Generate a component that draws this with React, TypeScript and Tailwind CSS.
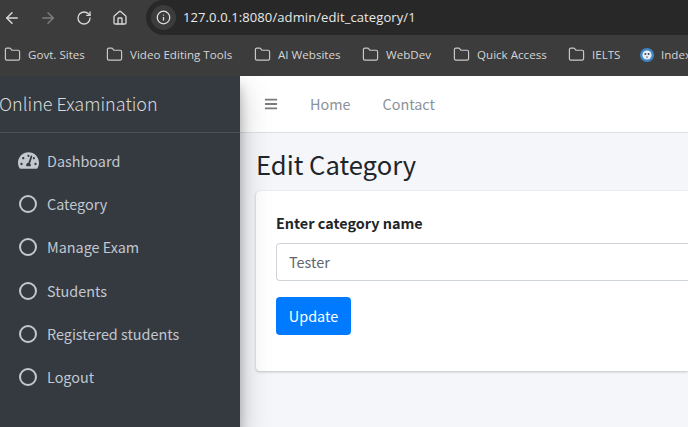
import { ArrowLeft, ArrowRight, RotateCw, Home, Info, Folder } from 'lucide-react';
import { FaBars, FaTachometerAlt } from 'react-icons/fa';

const bookmarks = [
  { label: 'Govt. Sites', width: 'w-[102px]' },
  { label: 'Video Editing Tools', width: 'w-[148px]' },
  { label: 'AI Websites', width: 'w-[108px]' },
  { label: 'WebDev', width: 'w-[91px]' },
  { label: 'Quick Access', width: 'w-[115px]' },
  { label: 'IELTS', width: 'w-[72px]' },
];

const navItems = ['Category', 'Manage Exam', 'Students', 'Registered students', 'Logout'];

function IndexFavicon() {
  return (
    <svg width="14" height="14" viewBox="0 0 14 14" className="shrink-0">
      <circle cx="7" cy="7" r="7" fill="#3f86c6" />
      <circle cx="7" cy="7" r="4.6" fill="#e8eef4" />
      <circle cx="5.4" cy="6" r="1" fill="#33475b" />
      <circle cx="8.6" cy="6" r="1" fill="#33475b" />
      <path d="M6.2 8.4h1.6L7 10.4z" fill="#33475b" />
    </svg>
  );
}

function BrowserChrome() {
  return (
    <div className="h-[76px] shrink-0 bg-[#3c3c3c] text-[#e3e3e3] font-['Open_Sans',sans-serif]">
      <div className="flex h-[35px] items-center">
        <ArrowLeft size={18} className="ml-[3px] text-[#d8d8d8]" />
        <ArrowRight size={18} className="ml-[18px] text-[#7d7d7d]" />
        <RotateCw size={16} className="ml-[19px] text-[#d8d8d8]" />
        <Home size={16} className="ml-[20px] text-[#d8d8d8]" />
        <div className="ml-[18px] flex h-[35px] flex-1 items-center rounded-l-full bg-[#282828] pl-[5px]">
          <div className="flex h-[25px] w-[25px] items-center justify-center rounded-full bg-[#3c3c3c]">
            <Info size={15} className="text-[#e3e3e3]" />
          </div>
          <span className="ml-[7px] text-[13px] tracking-[0.1px] text-[#e8e8e8]">127.0.0.1:8080/admin/edit_category/1</span>
        </div>
      </div>
      <div className="flex h-[40px] items-center overflow-hidden whitespace-nowrap pl-[4px] text-[11.6px] text-[#d5d5d5]">
        {bookmarks.map((b) => (
          <div key={b.label} className={`flex shrink-0 items-center gap-[7px] ${b.width}`}>
            <Folder size={17} strokeWidth={1.7} className="text-[#c8c8c8]" />
            <span>{b.label}</span>
          </div>
        ))}
        <div className="flex shrink-0 items-center gap-[7px]">
          <IndexFavicon />
          <span>Index</span>
        </div>
      </div>
    </div>
  );
}

function Sidebar() {
  return (
    <aside className="relative z-10 w-[240px] shrink-0 bg-[#343a40] shadow-[0_14px_28px_rgba(0,0,0,0.25),0_10px_10px_rgba(0,0,0,0.22)]">
      <div className="flex h-[57px] items-center border-b border-[#4b545c] pb-[2px]">
        <span className="-ml-[1px] text-[18px] font-light text-[#d6d8da]">Online Examination</span>
      </div>
      <nav className="pt-[6px] text-[14.4px] text-[#c2c7d0]">
        <div className="flex h-[43.3px] items-center pl-[18px]">
          <FaTachometerAlt size={21} className="text-[#c2c7d0]" />
          <span className="ml-[8px]">Dashboard</span>
        </div>
        {navItems.map((item) => (
          <div key={item} className="flex h-[43.3px] items-center pl-[19px]">
            <span className="h-[18px] w-[18px] rounded-full border-[2px] border-[#c2c7d0]" />
            <span className="ml-[10px]">{item}</span>
          </div>
        ))}
      </nav>
    </aside>
  );
}

export default function App() {
  return (
    <div className="flex h-[427px] w-[688px] flex-col overflow-hidden font-['Noto_Sans_CJK_SC','Noto_Sans',sans-serif]">
      <BrowserChrome />
      <div className="flex flex-1 overflow-hidden">
        <Sidebar />
        <main className="flex-1 bg-[#f4f6f9]">
          <div className="flex h-[57px] items-center border-b border-[#dee2e6] bg-white pl-[24px] text-[14.4px] text-[#8b9299]">
            <FaBars size={14} className="text-[#7b7b7b]" />
            <span className="ml-[32px]">Home</span>
            <span className="ml-[32px]">Contact</span>
          </div>
          <h1 className="ml-[16px] mt-[14px] text-[25.6px] leading-[34px] text-[#212529]">Edit Category</h1>
          <section className="ml-[16px] mt-[10px] h-[180px] rounded-l-[4px] bg-white pl-[20px] pt-[20px] shadow-[0_0_1px_rgba(0,0,0,0.13),0_1px_3px_rgba(0,0,0,0.2)]">
            <label className="block text-[14.4px] font-bold leading-[24px] text-[#212529]">Enter category name</label>
            <div className="mt-[8px] flex h-[38px] items-center rounded-l-[4px] border border-r-0 border-[#ced4da] pl-[12px] text-[14.4px] text-[#5f666d]">
              Tester
            </div>
            <button className="mt-[16px] h-[38px] w-[75px] rounded-[4px] bg-[#007bff] text-[14.4px] text-white">Update</button>
          </section>
        </main>
      </div>
    </div>
  );
}
